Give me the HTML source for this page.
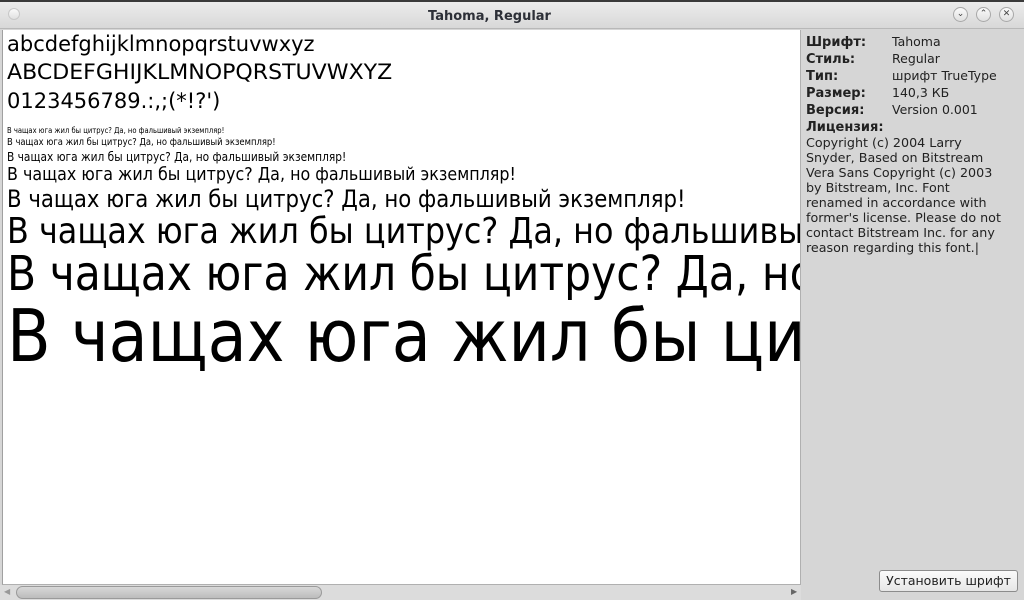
<!DOCTYPE html>
<html><head><meta charset="utf-8"><style>
*{margin:0;padding:0;box-sizing:border-box}
body{width:1024px;height:600px;overflow:hidden;background:#d6d6d6;font-family:"DejaVu Sans","Liberation Sans",sans-serif;position:relative;color:#000}
.top{position:absolute;left:0;top:0;width:1024px;height:2px;background:#3a3a3a}
.tb{position:absolute;left:0;top:2px;width:1024px;height:27px;background:linear-gradient(#ececec,#d8d8d8);border-bottom:1px solid #b8b8b8}
.title{position:absolute;left:428px;top:7px;font-size:13px;font-weight:bold;color:#2d3038;white-space:nowrap}
.circ{position:absolute;width:15px;height:15px;border-radius:50%;border:1px solid #a8a8a8;background:linear-gradient(#fafafa,#e0e0e0);font-size:9px;line-height:13px;text-align:center;color:#444}
.prev{position:absolute;left:2px;top:30px;width:799px;height:555px;background:#fff;border-left:1px solid #a0a0a0;border-right:1px solid #b0b0b0;border-bottom:1px solid #b0b0b0;overflow:hidden}
.l{position:absolute;left:4px;white-space:nowrap;line-height:1;transform-origin:0 0}
.c{transform:scaleX(0.885)}
.side{position:absolute;left:806px;top:33px;font-size:12.5px;color:#222}
.row{position:absolute;left:0;white-space:nowrap;line-height:17px}
.row b{display:inline-block;width:86px;font-size:13px}
.lic{position:absolute;left:806px;top:135px;width:218px;font-size:12.7px;line-height:15px;color:#222}
.btn{position:absolute;left:879px;top:570px;width:139px;height:22px;border:1px solid #8c8c8c;border-radius:3px;background:linear-gradient(#fbfbfb,#e6e6e6);font-size:12.5px;text-align:center;line-height:20px;color:#222}
.sb{position:absolute;left:0;top:585px;width:801px;height:15px;background:#dcdcdc}
.thumb{position:absolute;left:16px;top:1px;width:306px;height:13px;border-radius:7px;border:1px solid #9a9a9a;background:linear-gradient(#d8d8d8,#bcbcbc)}
</style></head><body>
<div class="top"></div>
<div class="tb">
<div class="circ" style="left:8px;top:6px;width:12px;height:12px;border-color:#c8c8c8"></div>
<div class="title">Tahoma, Regular</div>
<div class="circ" style="left:953px;top:5px">&#x2304;</div>
<div class="circ" style="left:976px;top:5px">&#x2303;</div>
<div class="circ" style="left:999px;top:5px">✕</div>
</div>
<div class="prev">
<div class="l" style="top:4px;font-size:21px">abcdefghijklmnopqrstuvwxyz</div>
<div class="l" style="top:32px;font-size:21px;transform:scaleX(1.05)">ABCDEFGHIJKLMNOPQRSTUVWXYZ</div>
<div class="l" style="top:61px;font-size:21px">0123456789.:,;(*!?')</div>
<div class="l c" style="top:97px;font-size:7.7px">В чащах юга жил бы цитрус? Да, но фальшивый экземпляр!</div>
<div class="l c" style="top:108px;font-size:9.5px">В чащах юга жил бы цитрус? Да, но фальшивый экземпляр!</div>
<div class="l c" style="top:121px;font-size:12px">В чащах юга жил бы цитрус? Да, но фальшивый экземпляр!</div>
<div class="l c" style="top:136px;font-size:18px">В чащах юга жил бы цитрус? Да, но фальшивый экземпляр!</div>
<div class="l c" style="top:157px;font-size:24px">В чащах юга жил бы цитрус? Да, но фальшивый экземпляр!</div>
<div class="l c" style="top:184px;font-size:36px">В чащах юга жил бы цитрус? Да, но фальшивый экземпляр!</div>
<div class="l c" style="top:220px;font-size:48px">В чащах юга жил бы цитрус? Да, но фальшивый экземпляр!</div>
<div class="l c" style="top:270px;font-size:72px">В чащах юга жил бы цитрус? Да, но фальшивый экземпляр!</div>
</div>
<div class="sb"><span style="position:absolute;left:4px;top:2px;font-size:8px;color:#999">◀</span><div class="thumb"></div><span style="position:absolute;left:791px;top:2px;font-size:8px;color:#666">▶</span></div>
<div class="side">
<div class="row" style="top:0"><b>Шрифт:</b>Tahoma</div>
<div class="row" style="top:17px"><b>Стиль:</b>Regular</div>
<div class="row" style="top:34px"><b>Тип:</b>шрифт TrueType</div>
<div class="row" style="top:51px"><b>Размер:</b>140,3 КБ</div>
<div class="row" style="top:68px"><b>Версия:</b>Version 0.001</div>
<div class="row" style="top:85px"><b>Лицензия:</b></div>
</div>
<div class="lic">Copyright (c) 2004 Larry<br>Snyder, Based on Bitstream<br>Vera Sans Copyright (c) 2003<br>by Bitstream, Inc. Font<br>renamed in accordance with<br>former's license. Please do not<br>contact Bitstream Inc. for any<br>reason regarding this font.|</div>
<div class="btn">Установить шрифт</div>
</body></html>
